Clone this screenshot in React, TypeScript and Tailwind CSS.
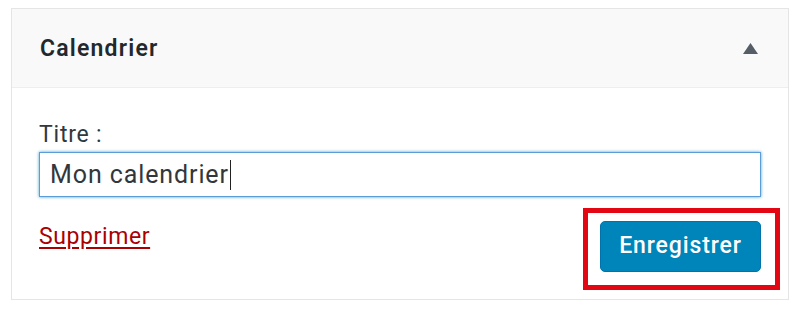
import { useState } from "react";

const font = { fontFamily: 'Roboto, "Liberation Sans", Arial, sans-serif' };

const App = () => {
  const [title] = useState("Mon calendrier");

  return (
    <div className="w-[800px] h-[314px] bg-white pt-[8px] pl-[11px]" style={font}>
      <section className="w-[778px] h-[292px] border border-[#e5e5e5] bg-white flex flex-col">
        <div className="h-[79px] shrink-0 bg-[#f9f9f9] border-b border-[#eeeeee] flex items-center justify-between pl-[28px] pr-[30px]">
          <h2 className="text-[23px] font-semibold text-[#23282d] tracking-[1.2px] leading-none">
            Calendrier
          </h2>
          <svg width="15" height="11" viewBox="0 0 15 11">
            <polygon points="7.5,0 15,11 0,11" fill="#555d66" />
          </svg>
        </div>

        <div className="flex flex-col px-[27px]">
          <label className="block pt-[34px] text-[23px] leading-[26px] text-[#32373c] tracking-[0.8px]">
            Titre :
          </label>
          <div className="mt-[4px] h-[45px] border border-[#5b9dd9] shadow-[0_0_3px_rgba(30,140,190,0.8)] flex items-center pl-[10px] text-[25px] text-[#32373c] tracking-[0.9px]">
            <span>{title}</span>
            <span className="w-[1.5px] h-[30px] bg-[#222] ml-[1px]" />
          </div>

          <div className="flex justify-between items-start mt-[24px]">
            <a
              href="#"
              className="mt-[3px] text-[23px] leading-[26px] text-[#a00] underline underline-offset-[3px] tracking-[0.6px]"
            >
              Supprimer
            </a>
            <div className="relative">
              <button className="w-[161px] h-[51px] rounded-[5px] bg-[#0085ba] border border-[#0073aa] text-white text-[23px] font-medium tracking-[0.9px]">
                Enregistrer
              </button>
              <span className="absolute -left-[17px] -top-[13px] -right-[19px] -bottom-[18px] border-[5px] border-[#e30613] pointer-events-none" />
            </div>
          </div>
        </div>
      </section>
    </div>
  );
};

export default App;
